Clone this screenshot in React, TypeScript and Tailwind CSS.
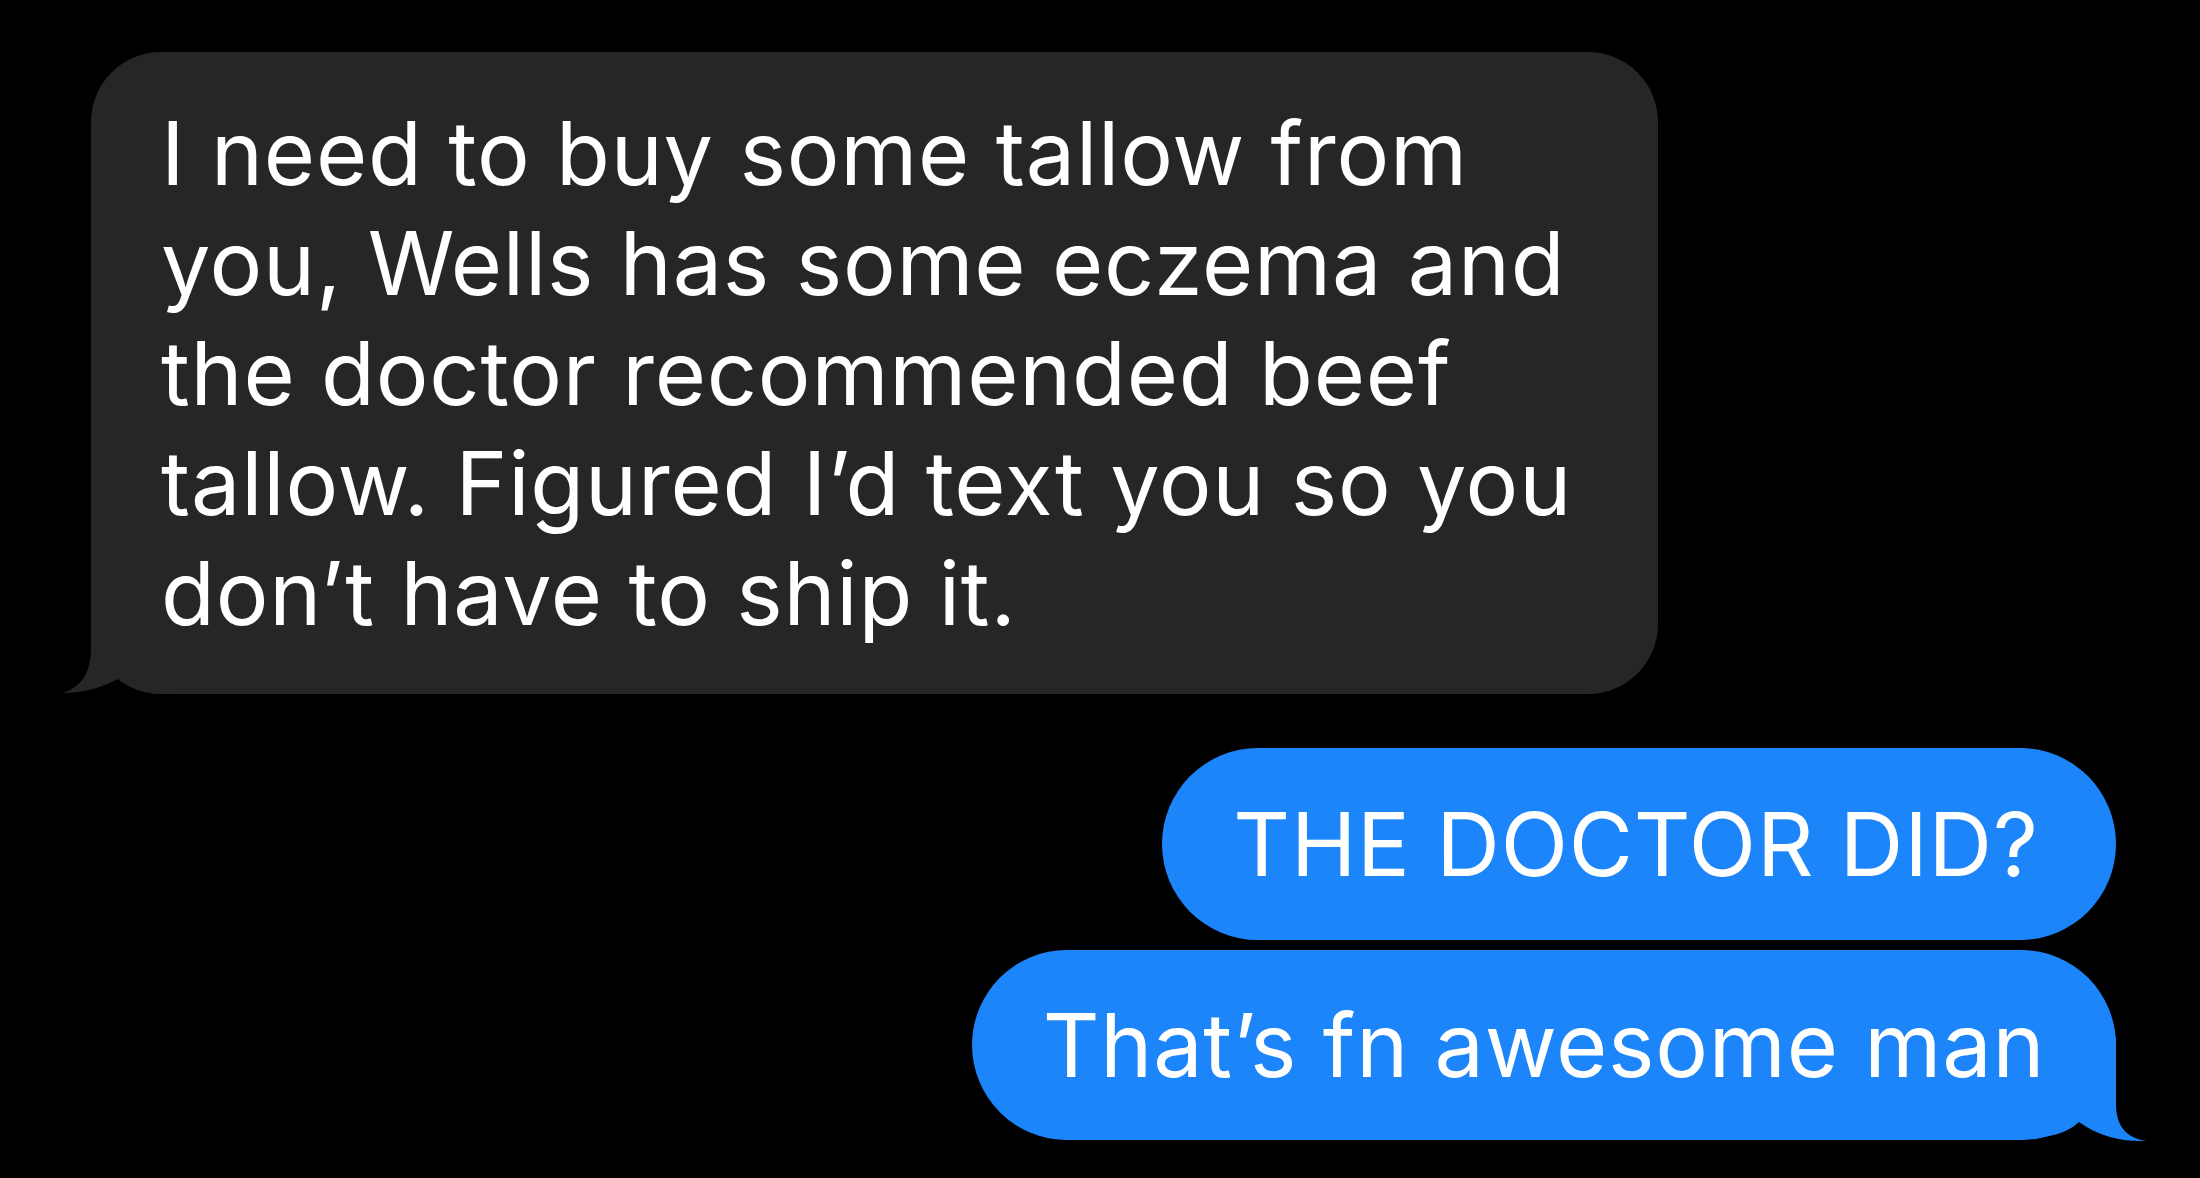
import React from "react";

const GRAY = "#262628";
const BLUE = "#1b85f9";

function GrayTail() {
  return (
    <svg
      className="absolute -left-[29px] bottom-0 h-[100px] w-[122px]"
      viewBox="0 0 122 100"
      fill={GRAY}
    >
      <path d="M29 0 L29 54 C29 80 18 94 0 99 C25 99 45 92 65 80 C78 92 92 99 110 100 L122 100 L122 0 Z" />
    </svg>
  );
}

function BlueTail() {
  return (
    <svg
      className="absolute -right-[30px] -bottom-[2px] h-[104px] w-[154px]"
      viewBox="0 0 154 104"
      fill={BLUE}
    >
      <path d="M124 0 L124 66 C124 90 136 100 154 103 C130 104 106 98 87 84 C74 96 56 102 0 102 L0 0 Z" />
    </svg>
  );
}

const lines = [
  "I need to buy some tallow from",
  "you, Wells has some eczema and",
  "the doctor recommended beef",
  "tallow. Figured I\u2019d text you so you",
  "don\u2019t have to ship it.",
];

export default function App() {
  return (
    <div
      className="flex h-[1178px] w-[2200px] flex-col overflow-hidden bg-black text-white"
      style={{ fontFamily: "Inter, 'Liberation Sans', sans-serif" }}
    >
      <div className="relative ml-[91px] mt-[52px] w-[1567px] self-start rounded-[70px] bg-[#262628] pl-[70px] pr-[40px] pt-[46px] pb-[46px]">
        <GrayTail />
        <div className="relative text-[88px] leading-[110px] tracking-[0.8px]">
          {lines.map((l) => (
            <div key={l} className="whitespace-nowrap">
              {l}
            </div>
          ))}
        </div>
      </div>

      <div className="mr-[84px] mt-[54px] flex flex-col items-end gap-[10px] self-end">
        <div className="flex h-[192px] w-[954px] items-center justify-center rounded-[96px] bg-[#1b85f9] pr-[6px]">
          <span className="whitespace-nowrap text-[88px] leading-none tracking-[0.8px]">
            THE DOCTOR DID?
          </span>
        </div>
        <div className="relative flex h-[190px] w-[1144px] items-center justify-center rounded-[95px] bg-[#1b85f9]">
          <BlueTail />
          <span className="relative whitespace-nowrap text-[88px] leading-none tracking-[0.8px]">
            That&rsquo;s fn awesome man
          </span>
        </div>
      </div>
    </div>
  );
}
